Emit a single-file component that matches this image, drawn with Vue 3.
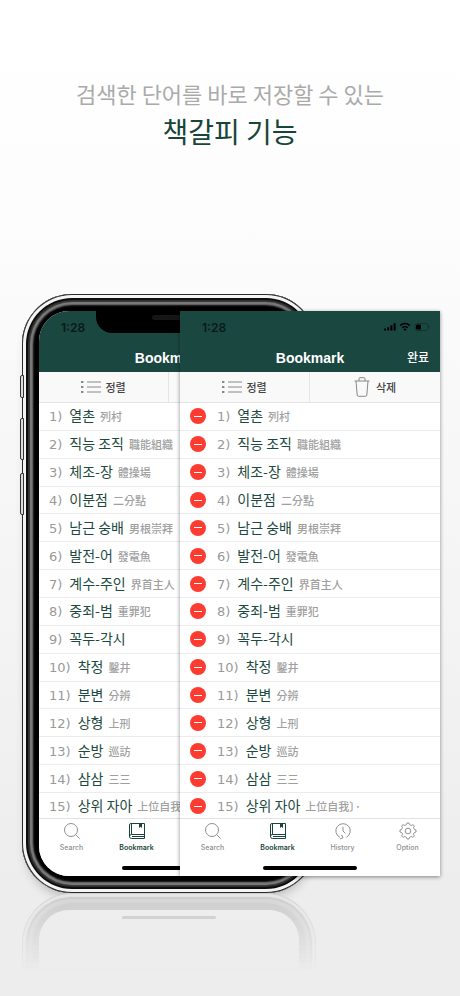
<template>
  <main class="page">
    <header class="headline">
      <p>검색한 단어를 바로 저장할 수 있는</p>
      <h1>책갈피 기능</h1>
    </header>

    <div class="stage">
      <div v-for="view in views" :key="view.id" :class="view.id">
        <template v-if="!view.editing">
          <i class="side side-mute"></i>
          <i class="side side-up"></i>
          <i class="side side-down"></i>
        </template>

        <section class="screen">
          <div v-if="!view.editing" class="notch"></div>

          <div class="top">
            <div class="status">
              <span>1:28</span>
              <svg v-if="view.editing" width="46" height="10" viewBox="0 0 46 10">
                <path d="M0 6.5h2v2H0zM3.2 5.2h2v3.3h-2zM6.4 3.2h2v5.3h-2zM9.6 1.2h2v7.3h-2z" />
                <g fill="none" stroke="#000" stroke-width="1.5">
                  <path d="M16.2 3.6a6.8 6.8 0 0 1 9.6 0" />
                  <path d="M18.2 5.8a4 4 0 0 1 5.6 0" />
                </g>
                <path d="M19.4 7.2a2.3 2.3 0 0 1 3.2 0L21 9z" />
                <rect x="31" y="1.5" width="13" height="7" rx="2" fill="none" stroke="#12362f" />
                <rect x="32" y="2.5" width="5" height="5" rx="1" />
                <path d="M45 3.8v2.4" stroke="#12362f" />
              </svg>
            </div>
            <div class="nav">
              <h2>Bookmark</h2>
              <button v-if="view.editing" class="done">완료</button>
            </div>
          </div>

          <div class="toolbar">
            <button>
              <svg width="20" height="14" viewBox="0 0 20 14" fill="none" stroke="#888">
                <path d="M6 2h14M6 7h14M6 12h14" />
                <path d="M0 2h2.4M0 7h2.4M0 12h2.4" stroke-width="2.2" />
              </svg>
              정렬
            </button>
            <button class="remove">
              <svg width="16" height="20" viewBox="0 0 16 20" fill="none" stroke="#888">
                <path d="M.5 4h15M5 4V1.5q0-.8.8-.8h4.4q.8 0 .8.8V4" />
                <path d="M2 4l1.2 14q.1 1.3 1.3 1.3h7q1.2 0 1.3-1.3L14 4" />
              </svg>
              삭제
            </button>
          </div>

          <ol class="words">
            <li v-for="(word, i) in words" :key="word.ko">
              <button v-if="view.editing" class="minus" :aria-label="word.ko + ' 삭제'"></button>
              <span class="num">{{ i + 1 }})</span>
              <span class="ko">{{ word.ko }}</span>
              <span class="hanja">{{ word.hanja }}</span>
            </li>
          </ol>

          <nav class="tabs">
            <a v-for="tab in tabs" :key="tab" href="#" :class="{ active: tab === 'Bookmark' }">
              <svg width="18" height="18" viewBox="0 0 18 18" fill="none" stroke="currentColor">
                <template v-if="tab === 'Search'">
                  <circle cx="8" cy="8" r="6.5" />
                  <path d="M12.6 12.6l4 4" />
                </template>
                <template v-else-if="tab === 'Bookmark'">
                  <path d="M3 1.5h13.5v15H3.500a2 2 0 0 1-2-2V3q0-1.500 1.500-1.500z" />
                  <path d="M3.500 1.500v11M1.500 14.500a2 2 0 0 1 2-2h13M4 14.500h12.500" />
                  <path d="M11 1.500h3v4.500l-1.500-1.200L11 6z" fill="currentColor" stroke="none" />
                </template>
                <template v-else-if="tab === 'History'">
                  <path d="M6 15.400A7.200 7.200 0 1 1 12.300 15.300" />
                  <path d="M9 4.800V9l2.400 2.400M7.600 12.800l1.400 3-3 1.200" />
                </template>
                <template v-else>
                  <path :d="gear" stroke-linejoin="round" />
                  <circle cx="9" cy="9" r="2.8" />
                </template>
              </svg>
              {{ tab }}
            </a>
          </nav>
          <div class="home"></div>
        </section>
      </div>
      <div class="mirror"></div>
    </div>
  </main>
</template>

<script setup>
const views = [
  { id: 'phone', editing: false },
  { id: 'sheet', editing: true },
]

const words = [
  { ko: '열촌', hanja: '列村' },
  { ko: '직능 조직', hanja: '職能組織' },
  { ko: '체조-장', hanja: '體操場' },
  { ko: '이분점', hanja: '二分點' },
  { ko: '남근 숭배', hanja: '男根崇拜' },
  { ko: '발전-어', hanja: '發電魚' },
  { ko: '계수-주인', hanja: '界首主人' },
  { ko: '중죄-범', hanja: '重罪犯' },
  { ko: '꼭두-각시', hanja: '' },
  { ko: '착정', hanja: '鑿井' },
  { ko: '분변', hanja: '分辨' },
  { ko: '상형', hanja: '上刑' },
  { ko: '순방', hanja: '巡訪' },
  { ko: '삼삼', hanja: '三三' },
  { ko: '상위 자아', hanja: '上位自我〕·' },
]

const tabs = ['Search', 'Bookmark', 'History', 'Option']

// eight rounded teeth around the centre of an 18x18 box
const gear = Array.from({ length: 48 }, (_, i) => {
  const a = (i / 48) * Math.PI * 2
  const r = 7.2 + 0.9 * Math.tanh(2.5 * Math.cos(a * 8))
  return `${i ? 'L' : 'M'}${(9 + r * Math.sin(a)).toFixed(2)} ${(9 - r * Math.cos(a)).toFixed(2)}`
}).join('') + 'z'
</script>

<style>
body {
  margin: 0;
  background: #ededed;
}
</style>

<style scoped>
.page {
  box-sizing: border-box;
  min-height: 100vh;
  padding-top: 77px;
  overflow: hidden;
  background: linear-gradient(#fff 0, #fdfdfd 20%, #fafafa 32%, #f4f4f4 60%, #ededed 88%);
  font-family: "Noto Sans CJK KR", sans-serif;
}

h1, h2, p, ol { margin: 0; padding: 0; font-weight: 400; }
button {
  border: none;
  padding: 0;
  background: none;
  font: inherit;
  color: inherit;
  cursor: pointer;
}

.headline { text-align: center; }
.headline p { font-size: 22px; line-height: 32px; color: #aaa; }
.headline h1 { font-size: 28px; line-height: 44px; color: #184539; }

/* phone and sheet share the middle column */
.stage {
  display: grid;
  grid-template-columns: 22fr 158fr 136fr 124fr 20fr;
  margin-top: 141px;
}
.phone {
  position: relative;
  grid-area: 1 / 2 / 2 / 4;
  padding: 17px;
  border-radius: 50px;
  background: #000;
  box-shadow:
    inset 0 0 0 1px #2a2a2a,
    inset 0 0 0 4px #f4f4f4,
    inset 0 0 1px 6px #0c0c0c,
    inset 0 0 1px 8px #333,
    inset 0 0 2px 11px #808080,
    0 8px 12px -6px rgba(0,0,0,0.3);
}
.side {
  position: absolute;
  left: -2px;
  box-sizing: border-box;
  width: 4px;
  border: 1px solid #333;
  border-radius: 2px 0 0 2px;
  background: #ddd;
}
.side-mute { top: 81px; height: 23px; }
.side-up { top: 124px; height: 42px; }
.side-down { top: 179px; height: 42px; }

.sheet {
  position: relative;
  grid-area: 1 / 3 / 2 / 5;
  padding-top: 17px;
}
.sheet .screen { box-shadow: 0 1px 4px rgba(0,0,0,0.45); }

.screen {
  position: relative;
  display: flex;
  flex-direction: column;
  aspect-ratio: 260 / 565;
  background: #fff;
}
.phone .screen { border-radius: 30px; overflow: hidden; }

.notch {
  position: absolute;
  top: 0;
  left: 22%;
  right: 22%;
  height: 22px;
  border-radius: 0 0 16px 16px;
  background: #000;
}
.notch::after {
  content: "";
  position: absolute;
  top: 4px;
  left: 38%;
  right: 38%;
  height: 5px;
  border-radius: 3px;
  background: #161616;
}

.top { background: #1b4741; }
.status {
  display: flex;
  justify-content: space-between;
  align-items: center;
  height: 32px;
  padding: 0 10px 0 22px;
  font: 600 12px Inter, sans-serif;
  color: #061a17;
}
.nav {
  display: grid;
  grid-template-columns: 1fr auto 1fr;
  align-items: center;
  height: 29px;
  padding: 0 11px;
  color: #fff;
}
.nav h2 {
  grid-column: 2;
  font: 700 14px "Liberation Sans", sans-serif;
}
.done { justify-self: end; padding-bottom: 2px; font-size: 12px; line-height: 20px; font-weight: 500; }

.toolbar {
  display: grid;
  grid-template-columns: 129fr 131fr;
  height: 31px;
  box-sizing: border-box;
  border-bottom: 1px solid #e4e4e4;
  background: #f9f9f9;
  font-size: 11px;
  font-weight: 500;
  color: #444;
}
.toolbar button {
  display: flex;
  justify-content: center;
  align-items: center;
  gap: 4px;
}
.toolbar .remove { gap: 6px; border-left: 1px solid #e4e4e4; }

.words {
  display: flex;
  flex: 1;
  flex-direction: column;
  min-height: 0;
  list-style: none;
}
.words li {
  display: flex;
  flex: 1;
  align-items: center;
  min-height: 0;
  padding-left: 10px;
  border-bottom: 1px solid #ececec;
  white-space: nowrap;
  line-height: 20px;
}
.minus {
  width: 16px;
  height: 16px;
  margin-right: 11px;
  border-radius: 50%;
  background: linear-gradient(#fff, #fff) center / 8px 1px no-repeat #fc3b31;
}
.num {
  margin-right: 7px;
  padding-top: 2px;
  font-family: "DejaVu Sans", sans-serif;
  font-size: 13px;
  color: #999;
}
.ko { margin-right: 5px; padding-bottom: 2px; font-size: 14px; color: #1d4a40; }
.hanja {
  font-size: 11px;
  font-weight: 500;
  font-feature-settings: "halt";
  color: #a0a0a0;
}

.tabs {
  position: relative;
  display: grid;
  grid-template-columns: repeat(4, 1fr);
  box-sizing: border-box;
  height: 58px;
  margin-top: -3px;
  padding-top: 3px;
  border-top: 1px solid #e2e2e2;
  background: #fff;
}
.tabs a {
  display: flex;
  flex-direction: column;
  align-items: center;
  gap: 3px;
  font: 500 7px/10px Inter, sans-serif;
  color: #8f8f8f;
  text-decoration: none;
}
.tabs a.active { color: #184539; font-weight: 600; }
.home {
  position: absolute;
  bottom: 6px;
  left: 32%;
  right: 32%;
  height: 4px;
  border-radius: 2px;
  background: #000;
}

/* faded reflection of the phone's lower edge */
.mirror {
  position: relative;
  grid-area: 2 / 2 / 3 / 4;
  height: 80px;
  border-radius: 50px 50px 0 0;
  background: #ededed;
  box-shadow:
    inset 0 0 0 1px #d0d0d0,
    inset 0 0 1px 4px #e6e6e6,
    inset 0 0 1px 6px #cacaca,
    inset 0 0 2px 10px #d6d6d6,
    inset 0 0 0 17px #cacaca;
  -webkit-mask-image: linear-gradient(#000, transparent);
  mask-image: linear-gradient(#000, transparent);
}
.mirror::before {
  content: "";
  position: absolute;
  inset: 17px 17px 0;
  border-radius: 30px 30px 0 0;
  background: #ededed;
}
.mirror::after {
  content: "";
  position: absolute;
  top: 23px;
  left: 34%;
  right: 34%;
  height: 3px;
  border-radius: 2px;
  background: #c6c6c6;
}
</style>
